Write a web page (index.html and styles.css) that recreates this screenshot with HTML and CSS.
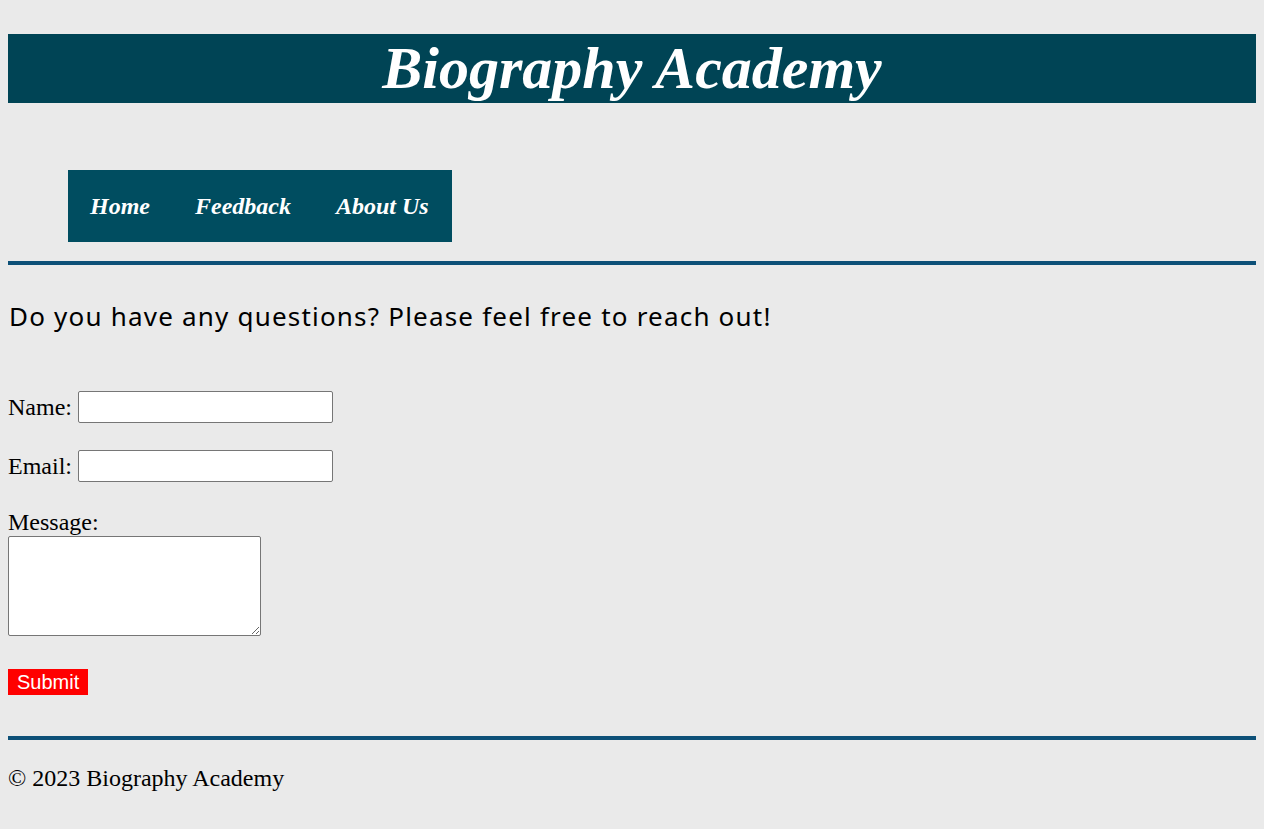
FILE: index.html
```html
<!DOCTYPE html>
<html lang="en">
<head>
<meta charset="utf-8">
<title>Biography Academy - Feedback</title>
<link rel="stylesheet" href="styles.css">
</head>
<body>
<header class="site-header">
  <h1 class="site-title">Biography Academy</h1>
</header>
<nav class="main-nav">
  <a href="#" class="nav-link">Home</a>
  <a href="#" class="nav-link">Feedback</a>
  <a href="#" class="nav-link">About Us</a>
</nav>
<hr class="rule">
<main class="content">
  <h2 class="intro">Do you have any questions? Please feel free to reach out!</h2>
  <form class="feedback-form">
    <div class="row">
      <label for="name" class="label">Name:</label>
      <input type="text" id="name" class="field">
    </div>
    <div class="row">
      <label for="email" class="label">Email:</label>
      <input type="email" id="email" class="field">
    </div>
    <div class="message">
      <label for="msg" class="label">Message:</label>
      <textarea id="msg" class="area"></textarea>
    </div>
    <button type="submit" class="submit">Submit</button>
  </form>
</main>
<hr class="rule rule-bottom">
<footer class="site-footer">© 2023 Biography Academy</footer>
</body>
</html>
```
FILE: styles.css
```css
html, body {
  background: #eaeaea;
}
body {
  margin: 8px;
  font-family: "Liberation Serif", "Times New Roman", serif;
  font-size: 24px;
  color: #000;
}
.site-header {
  margin-top: 26px;
  background: #004455;
  height: 69px;
}
.site-title {
  margin: 0;
  text-align: center;
  color: #fff;
  font-size: 60px;
  font-style: italic;
  font-weight: bold;
  line-height: 69px;
}
.main-nav {
  display: flex;
  width: max-content;
  margin: 67px 0 0 60px;
  padding: 22px 0;
  background: #004d60;
}
.nav-link {
  padding: 0 23px 0 22px;
  color: #fff;
  text-decoration: none;
  font-size: 24px;
  font-style: italic;
  font-weight: bold;
  line-height: 28px;
}
.rule {
  margin: 19px 0 0;
  height: 4px;
  border: 0;
  background: #0d5078;
}
.content {
  display: block;
}
.intro {
  margin: 34px 0 0;
  font-family: "Comic Sans MS", "Noto Sans", sans-serif;
  font-weight: normal;
  font-size: 26px;
  letter-spacing: 1.2px;
  line-height: 34px;
  padding-left: 1px;
}
.feedback-form {
  margin-top: 58px;
}
.row {
  display: flex;
  align-items: center;
  gap: 6px;
  height: 32px;
  margin-bottom: 27px;
}
.label {
  line-height: 27px;
}
.field {
  box-sizing: border-box;
  width: 255px;
  height: 32px;
  margin: 0;
  border: 1px solid #767676;
  border-radius: 2px;
  background: #fff;
}
.message {
  display: flex;
  flex-direction: column;
  align-items: flex-start;
}
.area {
  box-sizing: border-box;
  width: 253px;
  height: 100px;
  margin: 0;
  border: 1px solid #767676;
  border-radius: 2px;
  background: #fff;
}
.submit {
  display: block;
  margin-top: 33px;
  padding: 0 9px;
  height: 26px;
  border: 0;
  background: #ff0000;
  color: #fff;
  font-family: "Liberation Sans", Arial, sans-serif;
  font-size: 20px;
  line-height: 26px;
}
.rule-bottom {
  margin-top: 41px;
}
.site-footer {
  margin-top: 25px;
  line-height: 27px;
}
```
